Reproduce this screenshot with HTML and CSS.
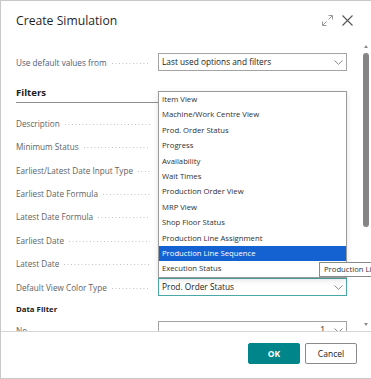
FILE: index.html
```html
<!DOCTYPE html>
<html lang="en">
<head>
  <meta charset="UTF-8">
  <meta name="viewport" content="width=device-width, initial-scale=1.0">
  <title>Create Simulation</title>
  <link rel="stylesheet" href="styles.css">
</head>
<body>

  <div class="dialog">
    <div class="dialog-header">
      <h1 class="dialog-title">Create Simulation</h1>
      <div class="header-actions">
        <svg class="icon-expand" width="11" height="11" viewBox="0 0 11 11">
          <path d="M6.5 0.5H10.5V4.5M10.5 0.5L6.5 4.5M0.5 6.5V10.5H4.5M0.5 10.5L4.5 6.5" fill="none" stroke="#9a9a9a" stroke-width="1"/>
        </svg>
        <svg class="icon-close" width="11" height="11" viewBox="0 0 11 11">
          <path d="M0.5 0.5L10.5 10.5M10.5 0.5L0.5 10.5" fill="none" stroke="#555" stroke-width="1.1"/>
        </svg>
      </div>
    </div>

    <div class="dialog-body">
      <div class="content">
        <div class="field">
          <div class="label label-blue"><span>Use default values from</span><span class="leader"></span></div>
          <div class="select">Last used options and filters<svg class="chevron" width="9" height="5" viewBox="0 0 9 5"><path d="M0.5 0.5L4.5 4.3L8.5 0.5" fill="none" stroke="#8a8a8a"/></svg></div>
        </div>

        <h2 class="group-title">Filters</h2>

        <div class="rows">
          <div class="field">
            <div class="label"><span>Description</span><span class="leader"></span></div>
            <div class="input"></div>
          </div>
          <div class="field">
            <div class="label"><span>Minimum Status</span><span class="leader"></span></div>
            <div class="input"></div>
          </div>
          <div class="field">
            <div class="label"><span>Earliest/Latest Date Input Type</span><span class="leader"></span></div>
            <div class="input"></div>
          </div>
          <div class="field">
            <div class="label"><span>Earliest Date Formula</span><span class="leader"></span></div>
            <div class="input"></div>
          </div>
          <div class="field">
            <div class="label"><span>Latest Date Formula</span><span class="leader"></span></div>
            <div class="input"></div>
          </div>
          <div class="field">
            <div class="label"><span>Earliest Date</span><span class="leader"></span></div>
            <div class="input"></div>
          </div>
          <div class="field">
            <div class="label"><span>Latest Date</span><span class="leader"></span></div>
            <div class="input"></div>
          </div>
          <div class="field">
            <div class="label"><span>Default View Color Type</span><span class="leader"></span></div>
            <div class="select focused">Prod. Order Status<svg class="chevron" width="9" height="5" viewBox="0 0 9 5"><path d="M0.5 0.5L4.5 4.3L8.5 0.5" fill="none" stroke="#8a8a8a"/></svg></div>
          </div>
        </div>

        <h3 class="subgroup-title">Data Filter</h3>
        <div class="field">
          <div class="label"><span>No.</span><span class="leader"></span></div>
          <div class="select number">1<svg class="chevron" width="9" height="5" viewBox="0 0 9 5"><path d="M0.5 0.5L4.5 4.3L8.5 0.5" fill="none" stroke="#8a8a8a"/></svg></div>
        </div>
      </div>

      <div class="scrollbar">
        <span class="arrow-up"></span>
        <span class="thumb"></span>
        <span class="arrow-down"></span>
      </div>

      <ul class="dropdown">
        <li>Item View</li>
        <li>Machine/Work Centre View</li>
        <li>Prod. Order Status</li>
        <li>Progress</li>
        <li>Availability</li>
        <li>Wait Times</li>
        <li>Production Order View</li>
        <li>MRP View</li>
        <li>Shop Floor Status</li>
        <li>Production Line Assignment</li>
        <li class="selected">Production Line Sequence</li>
        <li>Execution Status</li>
      </ul>
      <div class="tooltip">Production Line Sequence</div>
    </div>

    <div class="dialog-footer">
      <button class="btn btn-primary">OK</button>
      <button class="btn">Cancel</button>
    </div>
  </div>

</body>
</html>
```

FILE: styles.css
```css
* {
  box-sizing: border-box;
}

body {
  margin: 0;
  background-color: #fff;
  font-family: "Open Sans", "Noto Sans", sans-serif;
  color: #212121;
}

.dialog {
  width: 371px;
  height: 379px;
  display: flex;
  flex-direction: column;
  background-color: #fff;
  border: 1px solid #c8c8c8;
  border-right: none;
}

.dialog-header {
  height: 39px;
  flex: none;
  display: flex;
  align-items: center;
  justify-content: space-between;
  padding: 0 18px 0 15px;
}

.dialog-title {
  margin: 0;
  font-size: 12.2px;
  font-weight: 500;
  line-height: 20px;
  color: #1f1f1f;
}

.header-actions {
  display: flex;
  align-items: center;
  gap: 9px;
}

.header-actions svg {
  display: block;
}

.dialog-body {
  position: relative;
  flex: 1;
  display: flex;
  overflow: hidden;
}

.content {
  flex: 1;
  padding: 13px 15px 0 15px;
}

.field {
  display: grid;
  grid-template-columns: 142px 1fr;
  height: 18px;
  align-items: center;
}

.label {
  display: flex;
  align-items: center;
  padding-right: 8px;
  font-size: 8.2px;
  color: #626262;
  white-space: nowrap;
}

.label-blue {
  color: #4a6080;
}

.leader {
  flex: 1;
  height: 1px;
  margin: 2px 0 0 5px;
  background: linear-gradient(to right, #bdbdbd 1px, transparent 1px) repeat-x;
  background-size: 3.5px 1px;
}

.select,
.input {
  position: relative;
  height: 18px;
  border: 1px solid #a3a3a3;
  padding: 0 3px;
  font-size: 8.3px;
  line-height: 16px;
  color: #212121;
}

.select.focused {
  border-color: #4aa8a8;
}

.select.number {
  text-align: right;
  padding-right: 21px;
}

.chevron {
  position: absolute;
  right: 3px;
  top: 6px;
}

.group-title {
  margin: 14px 0 11.3px;
  padding-bottom: 1px;
  font-size: 9.6px;
  font-weight: 700;
  line-height: 16px;
  border-bottom: 1px solid #8f8f8f;
}

.rows .field {
  margin-bottom: 5.4px;
}

.subgroup-title {
  margin: 0.6px 0 3.7px;
  font-size: 7.8px;
  font-weight: 700;
  line-height: 16px;
}

.scrollbar {
  position: relative;
  width: 9px;
  flex: none;
}

.arrow-up,
.arrow-down {
  position: absolute;
  left: 2px;
  width: 0;
  height: 0;
  border-left: 2.5px solid transparent;
  border-right: 2.5px solid transparent;
}

.arrow-up {
  top: 5px;
  border-bottom: 3px solid #8a8a8a;
}

.arrow-down {
  top: 283px;
  border-top: 3px solid #8a8a8a;
}

.thumb {
  position: absolute;
  top: 13px;
  left: 1px;
  width: 6px;
  height: 174px;
  border-radius: 3px;
  background-color: #858585;
}

.dropdown {
  position: absolute;
  top: 51px;
  left: 157px;
  width: 189px;
  margin: 0;
  padding: 0;
  list-style: none;
  background-color: #fff;
  border: 1px solid #9a9a9a;
  box-shadow: 0 2px 6px rgba(0, 0, 0, 0.12);
}

.dropdown li {
  height: 15.4px;
  line-height: 15.4px;
  padding: 0 3px;
  font-size: 7.7px;
  color: #2f2f2f;
  white-space: nowrap;
}

.dropdown li.selected {
  background-color: #1462d2;
  color: #fff;
}

.tooltip {
  position: absolute;
  top: 222px;
  left: 318px;
  height: 15px;
  padding: 0 4px;
  border: 1px solid #8a8a8a;
  background-color: #fff;
  font-size: 7.7px;
  line-height: 13px;
  color: #333;
  white-space: nowrap;
}

.dialog-footer {
  flex: none;
  height: 47px;
  display: flex;
  justify-content: flex-end;
  align-items: flex-start;
  gap: 5px;
  padding: 11px 14px 0;
  border-top: 1px solid #d6d6d6;
}

.btn {
  width: 52px;
  height: 21px;
  padding: 0;
  font-family: inherit;
  font-size: 8.5px;
  color: #212121;
  background-color: #fff;
  border: 1px solid #8a8a8a;
  border-radius: 2px;
}

.btn-primary {
  background-color: #00858a;
  border-color: #00858a;
  color: #fff;
  font-weight: 700;
}
```
